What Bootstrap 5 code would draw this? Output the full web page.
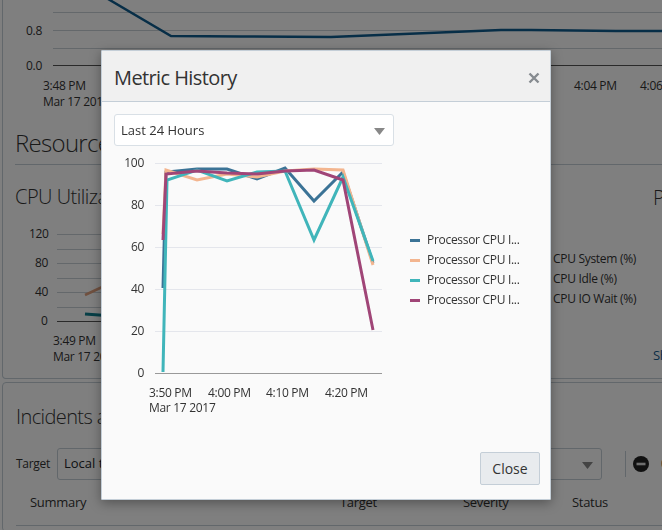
<!DOCTYPE html>
<html lang="en">
<head>
<meta charset="utf-8">
<title>Metric History</title>
<link rel="stylesheet" href="https://cdn.jsdelivr.net/npm/bootstrap@5.3.0/dist/css/bootstrap.min.css">
<style>
:root{--bs-backdrop-opacity:.4}
html,body{height:530px;overflow:hidden}
body{background:#fff;font-family:"Open Sans","Noto Sans",sans-serif;font-size:12px;color:#333;letter-spacing:-.3px}
svg text{font-family:"Open Sans","Noto Sans",sans-serif;font-size:12px;fill:#333;letter-spacing:-.3px}
.pg{width:690px}
.pane{margin-left:2px;border:1px solid #c4ced7;border-radius:4px}
.pane-a{height:379px;border-top:0;border-radius:0 0 4px 4px}
.pane-b{height:150px;margin-top:3px;padding:0 13px}
.top-chart{display:block;height:109px}
.res-title{font-size:24px;font-weight:300;line-height:32px;margin:18px 0 0 12px;padding-bottom:5px;border-bottom:1px solid #c4ced7;letter-spacing:-.7px}
.cpu-row{height:213px}
.cpu-title{font-size:20px;font-weight:300;line-height:28px;margin:0;letter-spacing:-.5px}
.cpu-left{padding-top:18px;padding-left:12px;width:620px}
.cpu-chart{display:block;margin:15px 0 0 -12px;height:160px}
.inc-title{font-size:20px;font-weight:300;line-height:28px;margin:20px 0 0;letter-spacing:-.6px}
.tg-row{height:32px;margin-top:17px}
.tg-sel{width:545px;height:32px;font-size:13px;padding:0 6px;margin-left:7px;background-color:#fff;border-color:#c4ced7;border-radius:3px}
.vbar{width:1px;height:26px;background:#c4ced7;margin-left:23px}
.ico-m{margin-left:7px}
.th-row{height:46px;border-bottom:1px solid #c4ced7;font-size:13px;padding-left:14px}
.th-1{width:310px}.th-2{width:123px}.th-3{width:109px}
.dlg{position:absolute;left:101px;top:50px;width:450px;height:450px;z-index:1060;border:1px solid #c4ced7;border-radius:1px;background:#fafafa;box-shadow:0 3px 12px rgba(0,0,0,.35)}
.dlg .modal-header{height:51px;background:#f0f0f0;border-bottom:1px solid #c4ced7;padding:3px 10px 0 12px;border-radius:0}
.dlg .modal-title{font-size:20px;font-weight:400;line-height:28px;color:#333;letter-spacing:-.6px}
.x-btn{line-height:0;padding:0}
.dlg .modal-body{padding:12px 12px 0}
.range{width:280px;height:32px;padding:2px 6px 0;font-size:13px;color:#333;background-color:#fff;border-color:#d9e0e6;border-radius:3px}
.range,.tg-sel{background-image:url("data:image/svg+xml,%3Csvg xmlns='http://www.w3.org/2000/svg' width='12' height='7'%3E%3Cpath d='M0 0h12L6 7z' fill='%23888'/%3E%3C/svg%3E");background-size:11px 7px;background-position:right 8px top 13px}
.plot{display:block;width:280px;height:275px}
.lg{width:120px;margin:84px 0 0 16px;padding:0}
.lg-item{height:20px;font-size:12px;color:#333}
.sw{display:block;width:10px;height:3px;margin-right:7px}
.s1{background:#3b7396}.s2{background:#f3b58f}.s3{background:#40b5ba}.s4{background:#a04577}
.dlg .modal-footer{position:absolute;left:0;right:0;bottom:0;padding:0 10px 14px;border:0;background:transparent}
.close-b{width:60px;height:33px;margin:0;padding:0;font-size:14px;color:#333;background:#e8ebee;border:1px solid #c4ced7;border-radius:2px}
.side-txt{position:absolute;left:553px;color:#333}
.side-big{position:absolute;left:653px;top:183px;font-size:20px;font-weight:300}
.side-sl{position:absolute;left:653px;top:346px;color:#145c8f;font-size:13px}
.y1{top:250px}.y2{top:270px}.y3{top:290px}
</style>
</head>
<body>
<div class="pg">
  <div class="pane pane-a">
    <svg class="top-chart" width="690" height="109" viewBox="0 0 690 109">
      <g stroke="#c9d0d6"><path d="M50 12.5H690M50 30.5H690M50 48.5H690"/></g>
      <path d="M50 65.5H690" stroke="#555"/>
      <text x="23" y="35">0.8</text><text x="23" y="70">0.0</text>
      <text x="40" y="90">3:48 PM</text><text x="40" y="106">Mar 17 2017</text>
      <text x="571" y="90">4:04 PM</text><text x="637" y="90">4:06 PM</text>
      <path d="M105 -1L168 36L238 36.5L328 37L498 30L528 30L613 31L690 31" fill="none" stroke="#0f5c8f" stroke-width="2.5"/>
    </svg>
    <h2 class="res-title">Resources</h2>
    <div class="cpu-row d-flex">
      <div class="cpu-left">
        <h3 class="cpu-title">CPU Utilization</h3>
        <svg class="cpu-chart" width="530" height="160" viewBox="0 0 530 160">
          <g stroke="#c9d0d6"><path d="M54 8.5H530M54 23.5H530M54 37.5H530M54 52.5H530M54 66.5H530M54 81.5H530"/></g>
          <path d="M54 95.5H530" stroke="#555"/>
          <text x="26" y="12">120</text><text x="32" y="41">80</text><text x="32" y="70">40</text><text x="38" y="99">0</text>
          <text x="50" y="119">3:49 PM</text><text x="50" y="135">Mar 17 2017</text>
          <path d="M82 69L110 56" stroke="#e0a17e" stroke-width="2.5" fill="none"/>
          <path d="M82 88L110 90" stroke="#0f7f8f" stroke-width="3" fill="none"/>
        </svg>
      </div>
    </div>
  </div>
  <div class="pane pane-b">
    <h3 class="inc-title">Incidents and Problems</h3>
    <div class="tg-row d-flex align-items-center">
      <span>Target</span>
      <select class="form-select tg-sel"><option>Local target</option></select>
      <span class="vbar"></span>
      <svg class="ico-m" width="16" height="16" viewBox="0 0 16 16"><circle cx="8" cy="8" r="8" fill="#222"/><path d="M3.5 6.7h9v2.6h-9z" fill="#ddd"/></svg>
      <span class="ms-2 ps-1">0</span>
    </div>
    <div class="th-row d-flex align-items-center">
      <span class="th-1">Summary</span><span class="th-2">Target</span><span class="th-3">Severity</span><span>Status</span>
    </div>
  </div>
</div>
<span class="side-big">Processor</span>
<span class="side-txt y1">CPU System (%)</span>
<span class="side-txt y2">CPU Idle (%)</span>
<span class="side-txt y3">CPU IO Wait (%)</span>
<span class="side-sl">Show</span>

<div class="modal-backdrop show"></div>

<div class="modal-content dlg">
  <div class="modal-header d-flex justify-content-between align-items-center">
    <h5 class="modal-title">Metric History</h5>
    <button type="button" class="btn border-0 x-btn" aria-label="Close">
      <svg width="12" height="12" viewBox="0 0 12 12"><path d="M1.5 1.5L10.5 10.5M10.5 1.5L1.5 10.5" stroke="#868b90" stroke-width="2.4"/></svg>
    </button>
  </div>
  <div class="modal-body">
    <select class="form-select range"><option>Last 24 Hours</option></select>
    <div class="d-flex align-items-start">
      <svg class="plot" viewBox="114 147 280 275">
        <g stroke="#e4e6ec"><path d="M155 164.5H382M155 206.5H382M155 248.5H382M155 290.5H382M155 332.5H382"/></g>
        <path d="M155 374.5H382" stroke="#999"/>
        <g text-anchor="end">
          <text x="144" y="168">100</text><text x="144" y="210">80</text><text x="144" y="252">60</text><text x="144" y="294">40</text><text x="144" y="336">20</text><text x="144" y="378">0</text>
        </g>
        <text x="149" y="398">3:50 PM</text><text x="208" y="398">4:00 PM</text><text x="266" y="398">4:10 PM</text><text x="325" y="398">4:20 PM</text>
        <text x="149" y="413">Mar 17 2017</text>
        <g fill="none" stroke-width="3" stroke-linejoin="miter">
          <path stroke="#3b7396" d="M163 289L166 173L197 170L227 170L257 180L285 169L314 202L343 173L373 264"/>
          <path stroke="#f3b58f" d="M163 235L166 171L197 181L227 175L257 178L285 172L314 170L343 171L373 266"/>
          <path stroke="#40b5ba" d="M163 373L167 181L197 171L227 182L257 173L285 172L314 241L343 178L373 262"/>
          <path stroke="#a04577" d="M163 241L166 175L197 172L227 174L257 175L285 172L314 171L343 181L373 331"/>
        </g>
      </svg>
      <ul class="lg list-unstyled">
        <li class="lg-item d-flex align-items-center"><span class="sw s1"></span>Processor CPU I...</li>
        <li class="lg-item d-flex align-items-center"><span class="sw s2"></span>Processor CPU I...</li>
        <li class="lg-item d-flex align-items-center"><span class="sw s3"></span>Processor CPU I...</li>
        <li class="lg-item d-flex align-items-center"><span class="sw s4"></span>Processor CPU I...</li>
      </ul>
    </div>
  </div>
  <div class="modal-footer">
    <button type="button" class="btn close-b" data-bs-dismiss="modal">Close</button>
  </div>
</div>
<script src="https://cdn.jsdelivr.net/npm/bootstrap@5.3.0/dist/js/bootstrap.bundle.min.js"></script>
</body>
</html>
